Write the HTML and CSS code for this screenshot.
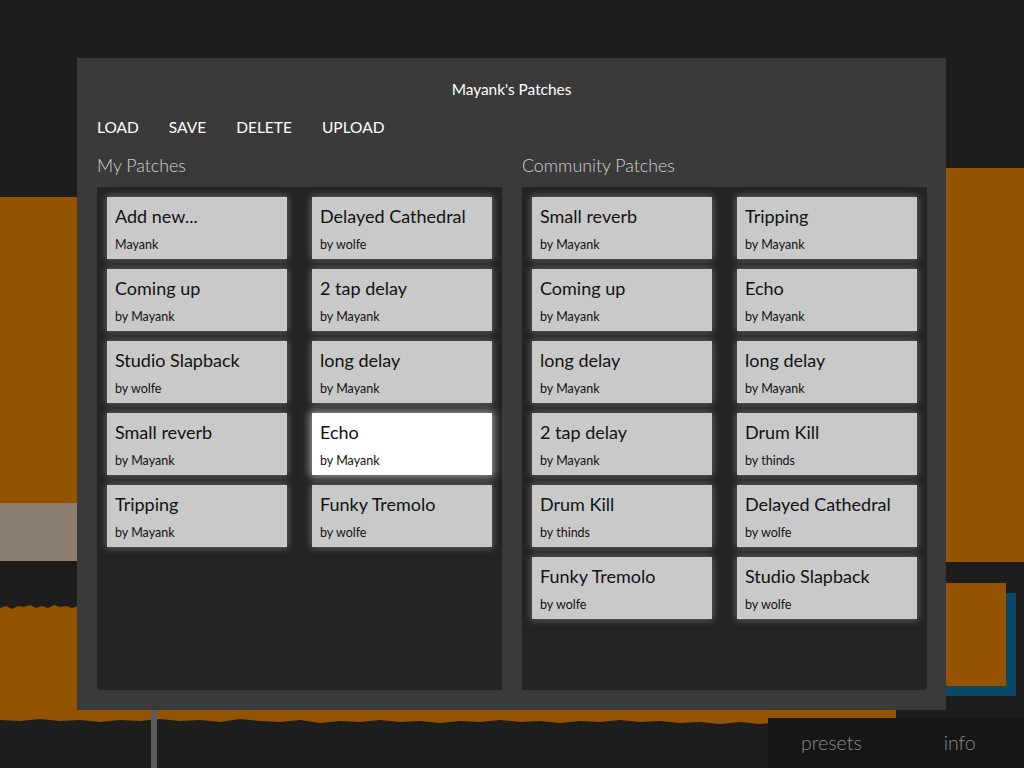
FILE: index.html
```html
<!DOCTYPE html>
<html>
<head>
<meta charset="utf-8">
<link rel="stylesheet" href="styles.css">
</head>
<body>
<div class="stage">
  <svg class="backdrop" width="1024" height="768" viewBox="0 0 1024 768">
    <rect x="0" y="197" width="100" height="306" fill="#945300"/>
    <rect x="0" y="503" width="100" height="58" fill="#8b7e6f"/>
    <polygon fill="#945300" points="0,608 6,606 12,609 18,606 24,607 30,605 36,608 42,606 48,608 54,605 60,607 66,606 72,608 78,606 100,606 100,700 896,700 896,718 880,721 860,720 840,722 820,721 800,723 780,722 760,724 740,722 720,724 700,722 680,723 660,721 640,722 620,720 600,722 580,721 560,723 540,721 520,722 500,720 480,722 460,721 440,723 420,721 400,722 380,720 360,722 340,721 320,723 300,720 280,722 260,721 240,719 220,722 200,720 180,721 160,719 140,721 120,720 100,722 80,720 60,721 40,719 20,721 0,720"/>
    <rect x="151" y="708" width="6" height="60" fill="#5b5b5b"/>
    <rect x="930" y="168" width="94" height="394" fill="#945300"/>
    <rect x="940" y="593" width="76" height="103" fill="#0b4867"/>
    <rect x="930" y="583" width="76" height="103" fill="#945300"/>
  </svg>

  <div class="tabbar">
    <span class="tab">presets</span>
    <span class="tab">info</span>
  </div>

  <div class="panel">
    <div class="title">Mayank's Patches</div>
    <div class="toolbar">
      <span>LOAD</span><span>SAVE</span><span>DELETE</span><span>UPLOAD</span>
    </div>
    <div class="sections">
      <section class="section">
        <h2 class="heading">My Patches</h2>
        <div class="list">
          <div class="card"><div class="name">Add new...</div><div class="by">Mayank</div></div>
          <div class="card"><div class="name">Delayed Cathedral</div><div class="by">by wolfe</div></div>
          <div class="card"><div class="name">Coming up</div><div class="by">by Mayank</div></div>
          <div class="card"><div class="name">2 tap delay</div><div class="by">by Mayank</div></div>
          <div class="card"><div class="name">Studio Slapback</div><div class="by">by wolfe</div></div>
          <div class="card"><div class="name">long delay</div><div class="by">by Mayank</div></div>
          <div class="card"><div class="name">Small reverb</div><div class="by">by Mayank</div></div>
          <div class="card selected"><div class="name">Echo</div><div class="by">by Mayank</div></div>
          <div class="card"><div class="name">Tripping</div><div class="by">by Mayank</div></div>
          <div class="card"><div class="name">Funky Tremolo</div><div class="by">by wolfe</div></div>
        </div>
      </section>
      <section class="section">
        <h2 class="heading">Community Patches</h2>
        <div class="list">
          <div class="card"><div class="name">Small reverb</div><div class="by">by Mayank</div></div>
          <div class="card"><div class="name">Tripping</div><div class="by">by Mayank</div></div>
          <div class="card"><div class="name">Coming up</div><div class="by">by Mayank</div></div>
          <div class="card"><div class="name">Echo</div><div class="by">by Mayank</div></div>
          <div class="card"><div class="name">long delay</div><div class="by">by Mayank</div></div>
          <div class="card"><div class="name">long delay</div><div class="by">by Mayank</div></div>
          <div class="card"><div class="name">2 tap delay</div><div class="by">by Mayank</div></div>
          <div class="card"><div class="name">Drum Kill</div><div class="by">by thinds</div></div>
          <div class="card"><div class="name">Drum Kill</div><div class="by">by thinds</div></div>
          <div class="card"><div class="name">Delayed Cathedral</div><div class="by">by wolfe</div></div>
          <div class="card"><div class="name">Funky Tremolo</div><div class="by">by wolfe</div></div>
          <div class="card"><div class="name">Studio Slapback</div><div class="by">by wolfe</div></div>
        </div>
      </section>
    </div>
  </div>
</div>
</body>
</html>
```

FILE: styles.css
```css
html, body {
  margin: 0;
  padding: 0;
}
body {
  background: #1d1d1d;
  font-family: "Lato", "Noto Sans", sans-serif;
}
.stage {
  position: relative;
  width: 1024px;
  height: 768px;
  overflow: hidden;
  background: #1d1d1d;
}
.backdrop {
  position: absolute;
  left: 0;
  top: 0;
  display: block;
}
.tabbar {
  position: absolute;
  left: 768px;
  top: 718px;
  width: 256px;
  height: 50px;
  background: #161616;
  display: flex;
  align-items: center;
  box-sizing: border-box;
  padding: 0 0 2px 33px;
}
.tab {
  color: #8a8a8a;
  font-size: 19.5px;
  font-weight: 300;
}
.tab + .tab {
  margin-left: 82px;
}
.panel {
  position: absolute;
  left: 77px;
  top: 58px;
  width: 869px;
  height: 652px;
  box-sizing: border-box;
  background: #3a3a3a;
  padding: 21px 19px 20px 20px;
  display: flex;
  flex-direction: column;
}
.title {
  text-align: center;
  color: #ffffff;
  font-size: 15.4px;
  line-height: 20px;
  padding-right: 1px;
}
.toolbar {
  margin-top: 18px;
  display: flex;
  gap: 30px;
  color: #ffffff;
  font-size: 15.5px;
  line-height: 20px;
}
.sections {
  margin-top: 17px;
  flex: 1;
  display: flex;
  gap: 20px;
  min-height: 0;
}
.section {
  flex: 0 0 405px;
  display: flex;
  flex-direction: column;
}
.heading {
  margin: 0;
  font-size: 17.8px;
  line-height: 22px;
  font-weight: 300;
  color: #d2d2d2;
}
.list {
  margin-top: 11px;
  flex: 1;
  background: #242424;
  padding: 10px;
  display: grid;
  grid-template-columns: 180px 180px;
  grid-auto-rows: 62px;
  column-gap: 25px;
  row-gap: 10px;
  align-content: start;
}
.card {
  background: #c9c9c9;
  box-shadow: 0 0 7px 1px rgba(150, 150, 150, 0.55);
  padding: 8px 8px 0 8px;
  box-sizing: border-box;
  color: #121212;
}
.card.selected {
  background: #ffffff;
  box-shadow: 0 0 8px 2px rgba(255, 255, 255, 0.55);
}
.name {
  font-size: 18px;
  line-height: 22px;
}
.by {
  margin-top: 10px;
  font-size: 12.5px;
  line-height: 16px;
}
```
